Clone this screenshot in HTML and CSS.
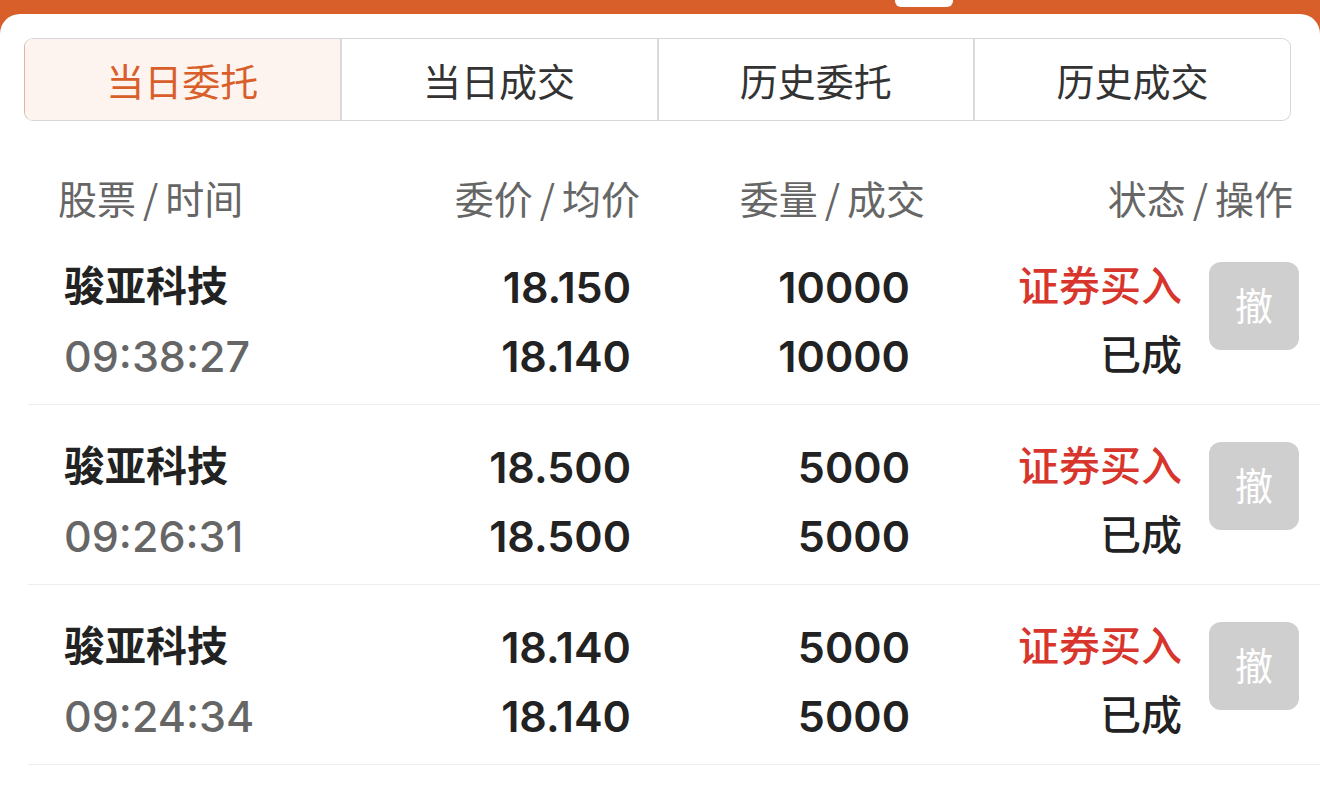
FILE: index.html
```html
<!DOCTYPE html>
<html lang="zh-CN">
  <head>
    <meta charset="UTF-8" />
    <title>当日委托</title>
    <link rel="stylesheet" href="styles.css">
  </head>
  <body>
    <div class="topbar">
      <span class="topbar__handle"></span>
    </div>
    <main class="panel">
      <nav class="tabs">
        <a class="tabs__item is_active">当日委托</a>
        <a class="tabs__item">当日成交</a>
        <a class="tabs__item">历史委托</a>
        <a class="tabs__item">历史成交</a>
      </nav>
      <div class="list_head">
        <span class="list_head__cell list_head__cell--left">股票<i class="sep">/</i>时间</span>
        <span class="list_head__cell">委价<i class="sep">/</i>均价</span>
        <span class="list_head__cell">委量<i class="sep">/</i>成交</span>
        <span class="list_head__cell">状态<i class="sep">/</i>操作</span>
      </div>
      <ul class="orders">
        <li class="order">
          <span class="order__name">骏亚科技</span>
          <span class="order__num">18.150</span>
          <span class="order__num">10000</span>
          <span class="order__type">证券买入</span>
          <button class="order__cancel">撤</button>
          <span class="order__time">09:38:27</span>
          <span class="order__num">18.140</span>
          <span class="order__num">10000</span>
          <span class="order__state">已成</span>
        </li>
        <li class="order">
          <span class="order__name">骏亚科技</span>
          <span class="order__num">18.500</span>
          <span class="order__num">5000</span>
          <span class="order__type">证券买入</span>
          <button class="order__cancel">撤</button>
          <span class="order__time">09:26:31</span>
          <span class="order__num">18.500</span>
          <span class="order__num">5000</span>
          <span class="order__state">已成</span>
        </li>
        <li class="order">
          <span class="order__name">骏亚科技</span>
          <span class="order__num">18.140</span>
          <span class="order__num">5000</span>
          <span class="order__type">证券买入</span>
          <button class="order__cancel">撤</button>
          <span class="order__time">09:24:34</span>
          <span class="order__num">18.140</span>
          <span class="order__num">5000</span>
          <span class="order__state">已成</span>
        </li>
      </ul>
    </main>
  </body>
</html>
```

FILE: styles.css
```css
:root {
  --color-orange: #d95f2a;
  --color-black: #222;
  --color-gray: #666;
  --color-red: #d8352d;
  --color-line: #eeeeee;
  font-family: Inter, 'Noto Sans CJK SC', sans-serif;
  color: var(--color-black);
}
* {
  margin: 0;
  padding: 0;
  box-sizing: border-box;
}
body {
  width: 1320px;
  height: 787px;
  overflow: hidden;
  background-color: var(--color-orange);
}
/* 顶部 */
.topbar {
  height: 14px;
  position: relative;
}
.topbar__handle {
  width: 58px;
  height: 7px;
  border-radius: 0 0 6px 6px;
  background-color: #fff;
  position: absolute;
  top: 0;
  left: 895px;
}
/* 面板 */
.panel {
  height: 773px;
  padding-top: 24px;
  border-radius: 20px 20px 0 0;
  background-color: #fff;
}
/* 标签 */
.tabs {
  display: flex;
  height: 83px;
  margin: 0 29px 0 24px;
  border: 1px solid #d6d6db;
  border-left-color: #dcb5a3;
  border-radius: 9px;
  overflow: hidden;
}
.tabs__item {
  flex: 1;
  display: flex;
  align-items: center;
  justify-content: center;
  font-family: 'Noto Sans CJK SC', sans-serif;
  font-size: 38px;
  color: #333;
}
.tabs__item:not(:first-child) {
  border-left: 2px solid #dadade;
}
.tabs__item.is_active {
  color: var(--color-orange);
  background-color: #fdf3ef;
}
/* 表头 */
.list_head {
  display: grid;
  grid-template-columns: 282px 300px 285px 368px;
  margin-left: 28px;
  padding: 51px 27px 3px 30px;
  font-family: 'Noto Sans CJK SC', sans-serif;
  font-size: 39px;
  line-height: 50px;
  color: var(--color-gray);
  text-align: right;
}
.list_head__cell--left {
  text-align: left;
}
.sep {
  margin: 0 7px;
  font-style: normal;
}
/* 委托列表 */
.orders {
  list-style: none;
  margin-left: 28px;
}
.order {
  display: grid;
  grid-template-columns: 264px 303px 279px 272px 90px;
  grid-template-rows: 69px 69px;
  align-items: center;
  padding: 27px 0 14px 36px;
  border-bottom: 1px solid var(--color-line);
  font-size: 43px;
  font-weight: 600;
  text-align: right;
}
/* 中文字体基线偏低，上提一点 */
.order__name,
.order__type,
.order__state {
  padding-bottom: 7px;
  font-family: 'Noto Sans CJK SC', sans-serif;
  font-size: 41px;
}
.order__name {
  text-align: left;
}
.order__time {
  font-weight: 500;
  color: var(--color-gray);
  text-align: left;
}
.order__type,
.order__state {
  font-weight: 500;
}
.order__type {
  color: var(--color-red);
}
.order__cancel {
  grid-row: span 2;
  align-self: start;
  width: 90px;
  height: 88px;
  margin: 10px 0 0 27px;
  padding-bottom: 6px;
  border: none;
  border-radius: 12px;
  background-color: #cfcfcf;
  font-family: 'Noto Sans CJK SC', sans-serif;
  font-size: 38px;
  color: #fff;
}
```
